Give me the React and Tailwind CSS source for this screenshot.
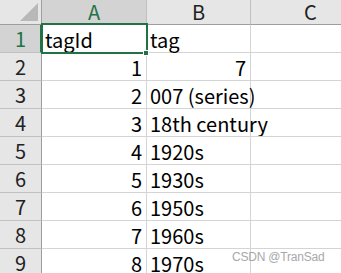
import React from 'react';

const rows = [
    ['tagId', 'tag'],
    [1, '7'],
    [2, '007 (series)'],
    [3, '18th century'],
    [4, '1920s'],
    [5, '1930s'],
    [6, '1950s'],
    [7, '1960s'],
    [8, '1970s'],
];

const isNum = (v) => typeof v === 'number' || /^\d+$/.test(v);

const App = () => {
    return (
        <div
            className="w-[341px] h-[273px] overflow-hidden bg-white relative"
            style={{ fontFamily: '"Noto Sans CJK SC", "Noto Sans", sans-serif' }}
        >
            <div className="grid grid-cols-[42px_105px_104px_120px] grid-rows-[25px_repeat(9,28px)]">
                {/* Corner */}
                <div className="relative bg-[#e6e6e6] border-r border-b border-[#9e9e9e]">
                    <svg className="absolute right-[3px] bottom-[3px]" width="18" height="18" viewBox="0 0 18 18">
                        <polygon points="18,0 18,18 0,18" fill="#b8b8b8" />
                    </svg>
                </div>
                {/* Column headers */}
                <div className="flex items-center justify-center bg-[#d3d3d3] border-r border-[#c0c0c0] border-b-2 border-b-[#217346] text-[20px] text-[#217346] leading-[20px]">A</div>
                <div className="flex items-center justify-center bg-[#e6e6e6] border-r border-[#c0c0c0] border-b border-b-[#9e9e9e] text-[20px] text-[#222] leading-[20px]">B</div>
                <div className="flex items-center justify-center bg-[#e6e6e6] border-r border-[#c0c0c0] border-b border-b-[#9e9e9e] text-[20px] text-[#222] leading-[20px]">C</div>

                {rows.map((r, i) => (
                    <React.Fragment key={i}>
                        <div
                            className={`flex items-end justify-center border-b border-[#c0c0c0] border-r text-[20px] leading-[26px] ${i === 0
                                ? 'bg-[#d3d3d3] text-[#217346] border-r-2 border-r-[#217346] pl-[1px]'
                                : 'bg-[#e6e6e6] text-[#222] border-r-[#9e9e9e]'
                                }`}
                        >
                            {i + 1}
                        </div>
                        {r.map((v, j) => (
                            <div
                                key={j}
                                className={`flex items-end border-r border-b border-[#d4d4d4] text-[20px] leading-[25px] text-black whitespace-nowrap ${isNum(v) && i > 0 ? 'justify-end pr-[4px]' : 'justify-start pl-[3px]'
                                    }`}
                            >
                                {v}
                            </div>
                        ))}
                        <div className="border-r border-b border-[#d4d4d4]" />
                    </React.Fragment>
                ))}
            </div>

            {/* Selection box on A1 */}
            <div className="absolute left-[41px] top-[23px] w-[107px] h-[31px] border-2 border-[#217346] pointer-events-none" />
            <div className="absolute left-[143px] top-[50px] w-[6px] h-[6px] bg-[#217346] border border-white" />

            {/* Watermark */}
            <div
                className="absolute left-[232px] top-[250px] text-[12px] tracking-[-0.2px] text-[#a8a8a8] leading-[14px] whitespace-nowrap"
                style={{ fontFamily: '"Liberation Sans", sans-serif' }}
            >
                CSDN @TranSad
            </div>
        </div>
    );
};

export default App;
